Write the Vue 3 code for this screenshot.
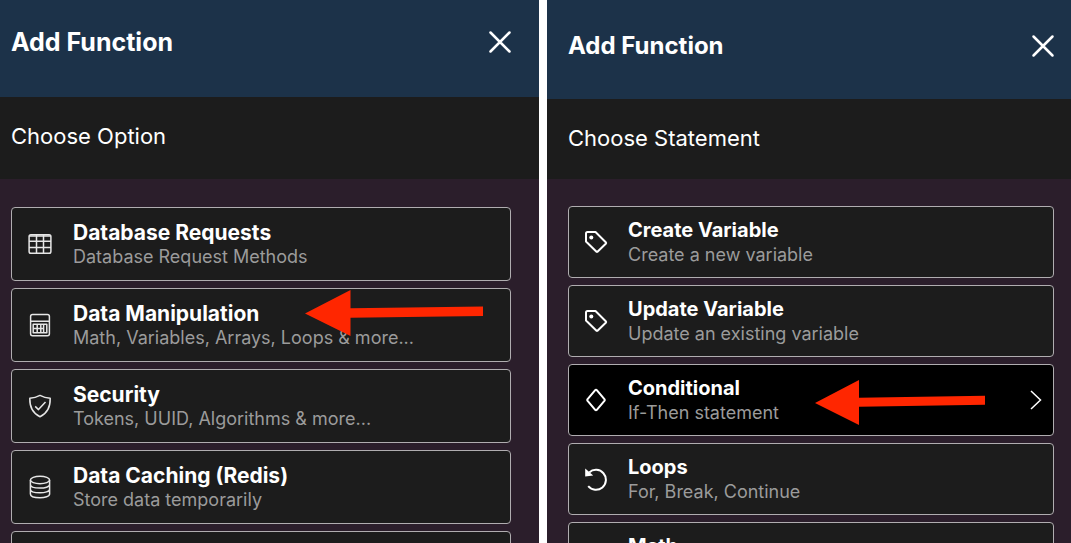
<script setup>
const panels = [
  {
    id: 'option',
    subtitle: 'Choose Option',
    items: [
      { title: 'Database Requests', text: 'Database Request Methods', icon: 'table' },
      { title: 'Data Manipulation', text: 'Math, Variables, Arrays, Loops & more...', icon: 'calculator', arrow: true },
      { title: 'Security', text: 'Tokens, UUID, Algorithms & more...', icon: 'shield' },
      { title: 'Data Caching (Redis)', text: 'Store data temporarily', icon: 'database' },
      { title: '', text: '', icon: '' },
    ],
  },
  {
    id: 'statement',
    subtitle: 'Choose Statement',
    items: [
      { title: 'Create Variable', text: 'Create a new variable', icon: 'tag' },
      { title: 'Update Variable', text: 'Update an existing variable', icon: 'tag' },
      { title: 'Conditional', text: 'If-Then statement', icon: 'diamond', active: true, arrow: true },
      { title: 'Loops', text: 'For, Break, Continue', icon: 'loop' },
      { title: 'Math', text: '', icon: '' },
    ],
  },
]
</script>

<template>
  <main class="page">
    <section v-for="panel in panels" :key="panel.id" class="panel" :class="panel.id">
      <header class="header">
        <h1 class="heading">Add Function</h1>
        <button class="close" type="button" aria-label="Close">
          <svg width="24" height="24" viewBox="0 0 24 24"><path d="M2.500 2.500 21.500 21.500M21.500 2.500 2.500 21.500" /></svg>
        </button>
      </header>
      <h2 class="subtitle">{{ panel.subtitle }}</h2>
      <div class="list">
        <button
          v-for="(item, i) in panel.items"
          :key="i"
          type="button"
          class="card"
          :class="{ active: item.active }"
        >
          <svg class="icon" width="24" height="24" viewBox="0 0 24 24">
            <g v-if="item.icon === 'table'">
              <rect x="1.1" y="2.8" width="21.8" height="18.4" rx="1.8" />
              <path d="M1 4H23M1 9.3H23M1 15.4H23M8.5 3V21M15.5 3V21" />
            </g>
            <g v-else-if="item.icon === 'calculator'">
              <rect x="2.6" y="1.4" width="18.8" height="21.4" rx="2" />
              <path d="M2.6 8.2H21.4M5.2 11.2H18.8V19.8H5.2ZM5.2 15.5H15.2M9.2 11.2V19.8M12.8 11.2V19.8M15.600 11.2V19.8" />
            </g>
            <g v-else-if="item.icon === 'shield'">
              <path d="M12 1.4C9 3 5.500 4 1.800 4.300C1.600 12.500 3.500 18.800 12 22.700C20.500 18.800 22.400 12.500 22.200 4.300C18.500 4 15 3 12 1.400Z" />
              <path d="M7.200 12.400 10.500 15.600 17.500 8" />
            </g>
            <g v-else-if="item.icon === 'database'">
              <ellipse cx="12" cy="5" rx="9.600" ry="3.700" />
              <path d="M2.400 5V19C2.400 24 21.600 24 21.600 19V5M2.400 9.500C2.400 14.300 21.600 14.300 21.600 9.500M2.400 14.200C2.400 19 21.600 19 21.600 14.200" />
            </g>
            <g v-else-if="item.icon === 'tag'" class="bold">
              <path d="M2 3.500Q2 2 3.500 2H11.500L22 12.500Q22.400 13 22 13.500L13.500 21.800Q13 22.200 12.500 21.800L2 11.500Z" />
              <circle class="dot" cx="7.300" cy="7.500" r="2" />
            </g>
            <g v-else-if="item.icon === 'diamond'" class="bold">
              <path d="M12 1.800Q12.600 1.800 13 2.300L20.600 11.400Q21 12 20.600 12.600L13 21.700Q12 22.500 11 21.700L3.400 12.600Q3 12 3.400 11.400L11 2.300Q11.400 1.800 12 1.800Z" />
            </g>
            <g v-else-if="item.icon === 'loop'" class="bold">
              <path d="M5.200 5.400A10 10 0 1 1 4.200 19.200" />
              <path class="dot" d="M1.200 1.500V9.400L9.200 8.600Z" />
            </g>
          </svg>
          <span class="copy">
            <span class="title">{{ item.title }}</span>
            <span class="text">{{ item.text }}</span>
          </span>
          <svg v-if="item.active" class="chevron" width="12" height="20" viewBox="0 0 12 20">
            <path d="M1 1 10.500 10 1 19" />
          </svg>
          <svg v-if="item.arrow" class="arrow" width="180" height="48" viewBox="0 0 180 48">
            <path v-if="panel.id === 'option'" d="M1 24.500 46.500 1V19.200L179 17.500V27L46.500 28.700V47Z" />
            <path v-else d="M1 24 45 1V18.700L171 16.700V25.700L45 27.700V46Z" />
          </svg>
        </button>
      </div>
    </section>
  </main>
</template>

<style>
html,
body {
  margin: 0;
  overflow: hidden;
}
</style>

<style scoped>
.page {
  display: grid;
  grid-template-columns: 539fr 524fr;
  gap: 8px;
  height: 100vh;
  overflow: hidden;
  background: #fff;
  color: #fff;
  font-family: Inter, "Liberation Sans", sans-serif;
}

.panel {
  overflow: hidden;
  background: #2b1e2b;
}

.header {
  display: flex;
  align-items: center;
  justify-content: space-between;
  box-sizing: border-box;
  height: 97px;
  padding: 0 27px 13px 11px;
  background: #1c3249;
}

.heading {
  margin: 0;
  font-size: 25px;
  font-weight: 650;
  line-height: 32px;
}

.close {
  display: flex;
  padding: 0;
  border: 0;
  background: none;
}

.close path {
  stroke: #fff;
  stroke-width: 2.500;
  stroke-linecap: round;
}

.subtitle {
  margin: 0;
  padding: 23px 11px 27px;
  background: #1c1c1c;
  font-size: 22px;
  font-weight: 400;
  line-height: 32px;
}

.list {
  display: flex;
  flex-direction: column;
  gap: 7px;
  padding: 28px 28px 0 11px;
}

.card {
  position: relative;
  display: flex;
  align-items: center;
  box-sizing: border-box;
  width: 100%;
  height: 74px;
  padding: 0 12px 0 16px;
  border: 1px solid #b0adb0;
  border-radius: 4px;
  background: #1c1c1c;
  color: #fff;
  font-family: inherit;
  text-align: left;
}

.card.active {
  background: #000;
}

.icon {
  flex: none;
  fill: none;
  stroke: #e6e6e6;
  stroke-width: 1.500;
  stroke-linejoin: round;
}

.bold {
  stroke: #fff;
  stroke-width: 2;
}

.dot {
  fill: #fff;
  stroke: none;
}

.copy {
  flex: 1;
  display: flex;
  flex-direction: column;
  margin-left: 21px;
}

.title {
  min-height: 25px;
  font-size: 21px;
  font-weight: 650;
  line-height: 25px;
}

.text {
  min-height: 24px;
  color: #9b9b9b;
  font-size: 18px;
  line-height: 24px;
}

.chevron {
  fill: none;
  stroke: #fff;
  stroke-width: 1.500;
}

.arrow {
  position: absolute;
  top: 0;
  right: 26px;
  fill: #ff2600;
}

.statement .header {
  height: 99px;
  padding: 0 16px 7px 21px;
}

.statement .heading {
  font-size: 24px;
}

.statement .subtitle {
  padding: 23px 21px 25px;
}

.statement .list {
  padding: 27px 17px 0 21px;
}

.statement .card {
  height: 72px;
  padding: 0 11px 0 15px;
}

.statement .copy {
  margin-left: 20px;
}

.statement .title {
  font-size: 20px;
}

.statement .text {
  font-size: 18px;
}

.statement .arrow {
  top: 14px;
  right: 59px;
}
</style>
